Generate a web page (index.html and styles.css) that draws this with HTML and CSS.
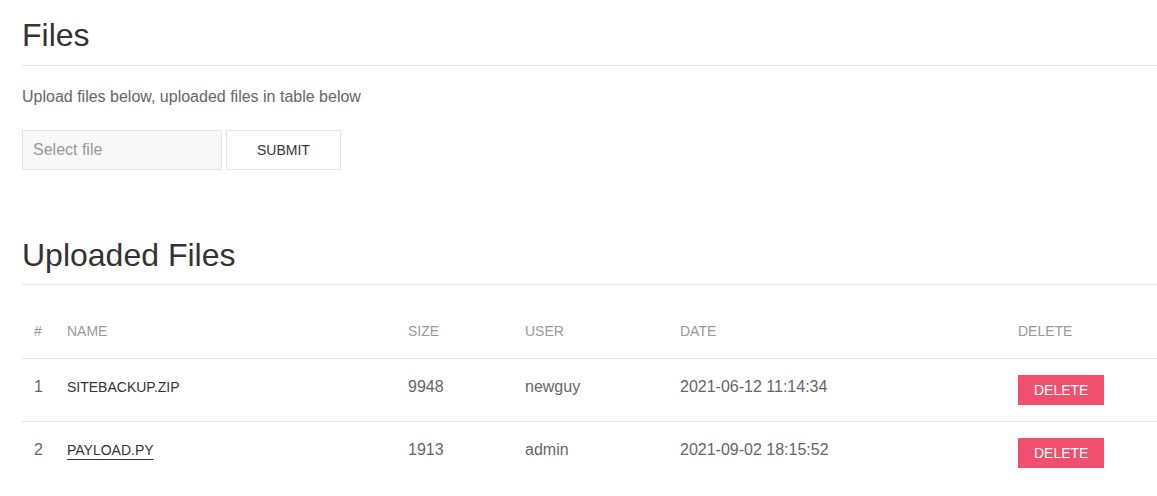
FILE: index.html
```html
<!DOCTYPE html>
<html lang="en">
<head>
<meta charset="utf-8">
<title>Files</title>
<link rel="stylesheet" href="styles.css">
</head>
<body>
<main class="page">
  <h1 class="heading">Files</h1>
  <p class="lead">Upload files below, uploaded files in table below</p>
  <form class="upload">
    <input class="file-input" type="text" placeholder="Select file">
    <button class="btn-default" type="button">Submit</button>
  </form>

  <h2 class="heading heading-second">Uploaded Files</h2>
  <table class="files">
    <colgroup>
      <col class="c-num"><col class="c-name"><col class="c-size"><col class="c-user"><col class="c-date"><col class="c-del">
    </colgroup>
    <thead>
      <tr><th>#</th><th>Name</th><th>Size</th><th>User</th><th>Date</th><th>Delete</th></tr>
    </thead>
    <tbody>
      <tr>
        <td>1</td>
        <td class="name">sitebackup.zip</td>
        <td>9948</td>
        <td>newguy</td>
        <td>2021-06-12 11:14:34</td>
        <td><button class="btn-danger" type="button">Delete</button></td>
      </tr>
      <tr>
        <td>2</td>
        <td class="name"><a class="file-link" href="#">payload.py</a></td>
        <td>1913</td>
        <td>admin</td>
        <td>2021-09-02 18:15:52</td>
        <td><button class="btn-danger" type="button">Delete</button></td>
      </tr>
    </tbody>
  </table>
</main>
</body>
</html>
```
FILE: styles.css
```css
* { box-sizing: border-box; }
html, body {
  margin: 0;
  background: #fff;
  font-family: "Liberation Sans", Arial, sans-serif;
  color: #666;
}
.page {
  padding: 16px 0 0 22px;
}
.heading {
  margin: 0;
  font-size: 32px;
  line-height: 38px;
  font-weight: 400;
  color: #333;
  padding-bottom: 11px;
  border-bottom: 1px solid #e5e5e5;
}
.heading-second {
  margin-top: 66px;
  padding-bottom: 10px;
}
.lead {
  margin: 19px 0 0;
  font-size: 16px;
  line-height: 24px;
  color: #666;
}
.upload {
  margin-top: 21px;
  display: flex;
  gap: 4px;
}
.file-input {
  width: 200px;
  height: 40px;
  margin: 0;
  padding: 0 10px;
  background: #f8f8f8;
  border: 1px solid #e5e5e5;
  font-family: inherit;
  font-size: 16px;
  color: #666;
  outline: none;
}
.file-input::placeholder { color: #999; }
.btn-default {
  height: 40px;
  margin: 0;
  padding: 0 30px;
  background: #fff;
  border: 1px solid #e5e5e5;
  font-family: inherit;
  font-size: 14px;
  line-height: 38px;
  text-transform: uppercase;
  color: #333;
}
.files {
  margin-top: 19px;
  width: 1135px;
  border-collapse: collapse;
  table-layout: fixed;
}
.c-num { width: 33px; }
.c-name { width: 341px; }
.c-size { width: 117px; }
.c-user { width: 155px; }
.c-date { width: 338px; }
.c-del { width: 151px; }
.files th {
  padding: 16px 12px;
  text-align: left;
  font-size: 14px;
  line-height: 22px;
  font-weight: 400;
  color: #999;
  text-transform: uppercase;
  vertical-align: bottom;
}
.files td {
  padding: 16px 12px;
  font-size: 16px;
  line-height: 24px;
  color: #666;
  vertical-align: top;
}
.files thead tr,
.files tbody tr + tr { border-top: 0; }
.files thead tr { border-bottom: 1px solid #e5e5e5; }
.files tbody tr + tr { border-top: 1px solid #e5e5e5; }
.files td.name {
  font-size: 14px;
  color: #333;
  text-transform: uppercase;
}
.file-link {
  color: #333;
  text-decoration: underline;
  text-underline-offset: 4px;
  text-decoration-thickness: 1px;
}
.btn-danger {
  display: inline-block;
  margin: 0;
  padding: 0 16px;
  height: 30px;
  line-height: 30px;
  border: 0;
  background: #f0506e;
  color: #fff;
  font-family: inherit;
  font-size: 14px;
  text-transform: uppercase;
}
```
